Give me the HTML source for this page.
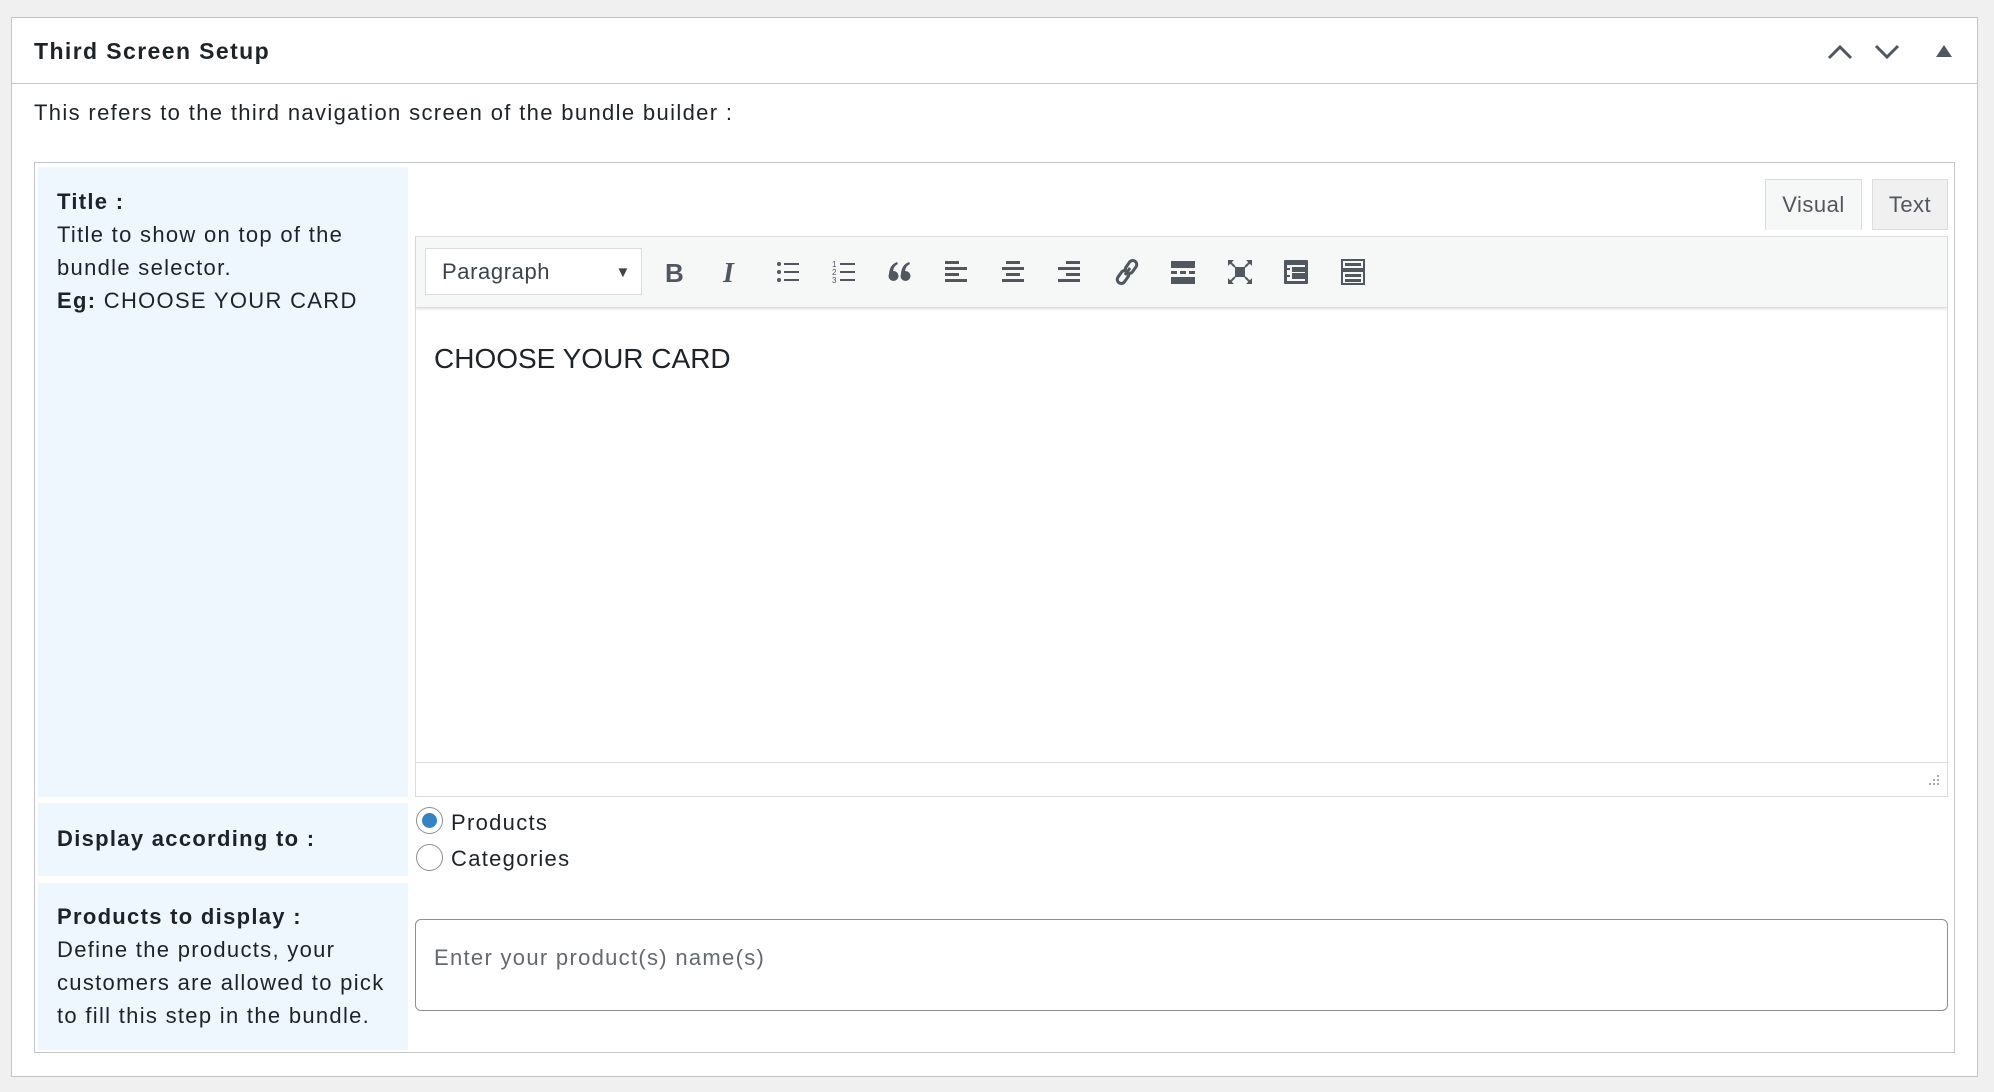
<!DOCTYPE html>
<html><head><meta charset="utf-8"><style>
*{box-sizing:border-box;margin:0;padding:0}
body{width:1994px;height:1092px;background:#f0f0f1;font-family:"Liberation Sans",Arial,sans-serif;color:#3c434a;position:relative;overflow:hidden;letter-spacing:1.3px}
.a{position:absolute}
.panel{left:11px;top:17px;width:1967px;height:1060px;background:#fff;border:1px solid #c3c4c7}
.hdr{left:12px;top:83px;width:1965px;height:1px;background:#c3c4c7}
.box{left:34px;top:162px;width:1921px;height:891px;border:1px solid #c3c4c7;background:#fff}
.blue{background:#eef6fe;left:38px;width:370px}
.lbl{font-size:22px;line-height:33px;color:#1d2327;left:57px}
.ic{position:absolute;top:258px;width:28px;height:28px}
.ic svg{width:28px;height:28px;fill:#50575e}
</style></head><body>
<div class="a panel"></div>
<div class="a hdr"></div>
<div class="a" style="left:34px;top:38px;font-size:23px;font-weight:bold;color:#1d2327;letter-spacing:1.4px">Third Screen Setup</div>
<svg class="a" style="left:1826px;top:42px" width="28" height="20" viewBox="0 0 28 20"><path d="M3 16 L14 5 L25 16" stroke="#50575e" stroke-width="3" fill="none"/></svg>
<svg class="a" style="left:1873px;top:42px" width="28" height="20" viewBox="0 0 28 20"><path d="M3 4 L14 15 L25 4" stroke="#50575e" stroke-width="3" fill="none"/></svg>
<svg class="a" style="left:1936px;top:45px" width="16" height="12" viewBox="0 0 16 12"><path d="M8 0 L16 12 L0 12Z" fill="#50575e"/></svg>
<div class="a" style="left:34px;top:100px;font-size:22px;color:#1d2327;letter-spacing:1.35px">This refers to the third navigation screen of the bundle builder :</div>
<div class="a box"></div>
<div class="a blue" style="top:167px;height:630px"></div>
<div class="a blue" style="top:803px;height:73px"></div>
<div class="a blue" style="top:883px;height:167px"></div>
<div class="a lbl" style="top:185px"><b>Title :</b><br>Title to show on top of the<br>bundle selector.<br><b>Eg:</b> CHOOSE YOUR CARD</div>
<div class="a lbl" style="top:822px"><b>Display according to :</b></div>
<div class="a lbl" style="top:900px"><b>Products to display :</b><br>Define the products, your<br>customers are allowed to pick<br>to fill this step in the bundle.</div>
<div class="a" style="left:1765px;top:179px;width:97px;height:51px;background:#f6f7f7;border:1px solid #dcdcde;border-bottom:none;font-size:22px;text-align:center;line-height:50px;color:#50575e;letter-spacing:0.5px">Visual</div>
<div class="a" style="left:1872px;top:179px;width:76px;height:51px;background:#f0f0f1;border:1px solid #dcdcde;font-size:22px;text-align:center;line-height:50px;color:#50575e;letter-spacing:0.5px">Text</div>
<div class="a" style="left:415px;top:236px;width:1533px;height:561px;border:1px solid #dcdcde;background:#fff"></div>
<div class="a" style="left:416px;top:237px;width:1531px;height:71px;background:#f6f7f7;border-bottom:1px solid #dcdcde;box-shadow:0 2px 2px rgba(0,0,0,.08)"></div>
<div class="a" style="left:425px;top:248px;width:217px;height:47px;background:#fff;border:1px solid #dcdcde;font-size:22px;line-height:45px;padding-left:16px;color:#3c434a;letter-spacing:0.6px">Paragraph<span style="position:absolute;right:10px;font-size:15px;top:1px">▼</span></div>
<div class="ic" style="left:661px"><svg viewBox="0 0 28 28"><text x="4" y="24" font-family="Liberation Sans" font-weight="bold" font-size="26" fill="#50575e">B</text></svg></div>
<div class="ic" style="left:717px"><svg viewBox="0 0 28 28"><text x="6" y="24" font-family="Liberation Serif" font-style="italic" font-weight="bold" font-size="28" fill="#50575e">I</text></svg></div>
<div class="ic" style="left:774px"><svg viewBox="0 0 28 28"><circle cx="5" cy="6" r="2"/><circle cx="5" cy="14" r="2"/><circle cx="5" cy="22" r="2"/><rect x="10" y="5" width="15" height="2"/><rect x="10" y="13" width="15" height="2"/><rect x="10" y="21" width="15" height="2"/></svg></div>
<div class="ic" style="left:830px"><svg viewBox="0 0 28 28"><text x="2" y="9" font-size="8" font-family="Liberation Sans" fill="#50575e">1</text><text x="2" y="17" font-size="8" font-family="Liberation Sans" fill="#50575e">2</text><text x="2" y="25" font-size="8" font-family="Liberation Sans" fill="#50575e">3</text><rect x="10" y="5" width="15" height="2"/><rect x="10" y="13" width="15" height="2"/><rect x="10" y="21" width="15" height="2"/></svg></div>
<div class="ic" style="left:886px"><svg viewBox="0 0 28 28"><circle cx="7.5" cy="18" r="5"/><circle cx="19.5" cy="18" r="5"/><path d="M3 17 C3 10 6 6 11 4 L12 6 C8 8 7 11 7 15Z"/><path d="M15 17 C15 10 18 6 23 4 L24 6 C20 8 19 11 19 15Z"/></svg></div>
<div class="ic" style="left:942px"><svg viewBox="0 0 28 28"><rect x="3" y="3" width="14" height="3"/><rect x="3" y="9" width="22" height="3"/><rect x="3" y="15" width="14" height="3"/><rect x="3" y="21" width="22" height="3"/></svg></div>
<div class="ic" style="left:999px"><svg viewBox="0 0 28 28"><rect x="7" y="3" width="14" height="3"/><rect x="3" y="9" width="22" height="3"/><rect x="7" y="15" width="14" height="3"/><rect x="3" y="21" width="22" height="3"/></svg></div>
<div class="ic" style="left:1055px"><svg viewBox="0 0 28 28"><rect x="11" y="3" width="14" height="3"/><rect x="3" y="9" width="22" height="3"/><rect x="11" y="15" width="14" height="3"/><rect x="3" y="21" width="22" height="3"/></svg></div>
<div class="ic" style="left:1113px"><svg viewBox="0 0 28 28"><path d="M12 17 L17 10" stroke="#50575e" stroke-width="3" fill="none"/><rect x="14" y="2" width="8" height="14" rx="4" transform="rotate(35 18 9)" stroke="#50575e" stroke-width="3" fill="none"/><rect x="6" y="12" width="8" height="14" rx="4" transform="rotate(35 10 19)" stroke="#50575e" stroke-width="3" fill="none"/></svg></div>
<div class="ic" style="left:1169px"><svg viewBox="0 0 28 28"><rect x="2" y="3" width="24" height="7"/><rect x="2" y="13" width="6" height="3"/><rect x="11" y="13" width="6" height="3"/><rect x="20" y="13" width="6" height="3"/><rect x="2" y="19" width="24" height="7"/></svg></div>
<div class="ic" style="left:1226px"><svg viewBox="0 0 28 28"><rect x="9" y="9" width="10" height="10"/><path d="M3 3 L9 9 M25 3 L19 9 M3 25 L9 19 M25 25 L19 19" stroke="#50575e" stroke-width="2"/><path d="M2 2h6l-6 6zM26 2h-6l6 6zM2 26h6l-6-6zM26 26h-6l6-6z"/></svg></div>
<div class="ic" style="left:1282px"><svg viewBox="0 0 28 28"><rect x="2" y="2" width="24" height="24" rx="1"/><rect x="5" y="7" width="18" height="16" fill="#f6f7f7"/><rect x="5" y="10" width="3" height="2"/><rect x="10" y="9" width="13" height="5"/><rect x="5" y="17" width="3" height="2"/><rect x="10" y="15" width="13" height="6"/></svg></div>
<div class="ic" style="left:1339px"><svg viewBox="0 0 28 28"><rect x="3" y="2" width="22" height="9" fill="none" stroke="#50575e" stroke-width="2"/><rect x="6" y="5" width="16" height="3"/><rect x="3" y="13" width="22" height="13" fill="none" stroke="#50575e" stroke-width="2"/><rect x="6" y="16" width="16" height="3"/><rect x="6" y="21" width="16" height="3"/></svg></div>
<div class="a" style="left:434px;top:343px;font-size:28px;color:#1d2327;letter-spacing:0">CHOOSE YOUR CARD</div>
<div class="a" style="left:416px;top:762px;width:1531px;height:1px;background:#dcdcde"></div>
<svg class="a" style="left:1926px;top:774px" width="14" height="14"><g fill="#a7aaad"><rect x="11" y="1" width="2" height="2"/><rect x="7" y="5" width="2" height="2"/><rect x="11" y="5" width="2" height="2"/><rect x="3" y="9" width="2" height="2"/><rect x="7" y="9" width="2" height="2"/><rect x="11" y="9" width="2" height="2"/></g></svg>
<div class="a" style="left:416px;top:807px;width:27px;height:27px;border-radius:50%;border:1px solid #8c8f94;background:#fff"><div style="margin:5px;width:15px;height:15px;border-radius:50%;background:#3582c4"></div></div>
<div class="a" style="left:416px;top:844px;width:27px;height:27px;border-radius:50%;border:1px solid #8c8f94;background:#fff"></div>
<div class="a" style="left:451px;top:810px;font-size:22px;color:#1d2327">Products</div>
<div class="a" style="left:451px;top:846px;font-size:22px;color:#1d2327">Categories</div>
<div class="a" style="left:415px;top:919px;width:1533px;height:92px;border:1px solid #8c8f94;border-radius:6px;background:#fff;font-size:22px;color:#646970;line-height:76px;padding-left:18px">Enter your product(s) name(s)</div>
</body></html>
